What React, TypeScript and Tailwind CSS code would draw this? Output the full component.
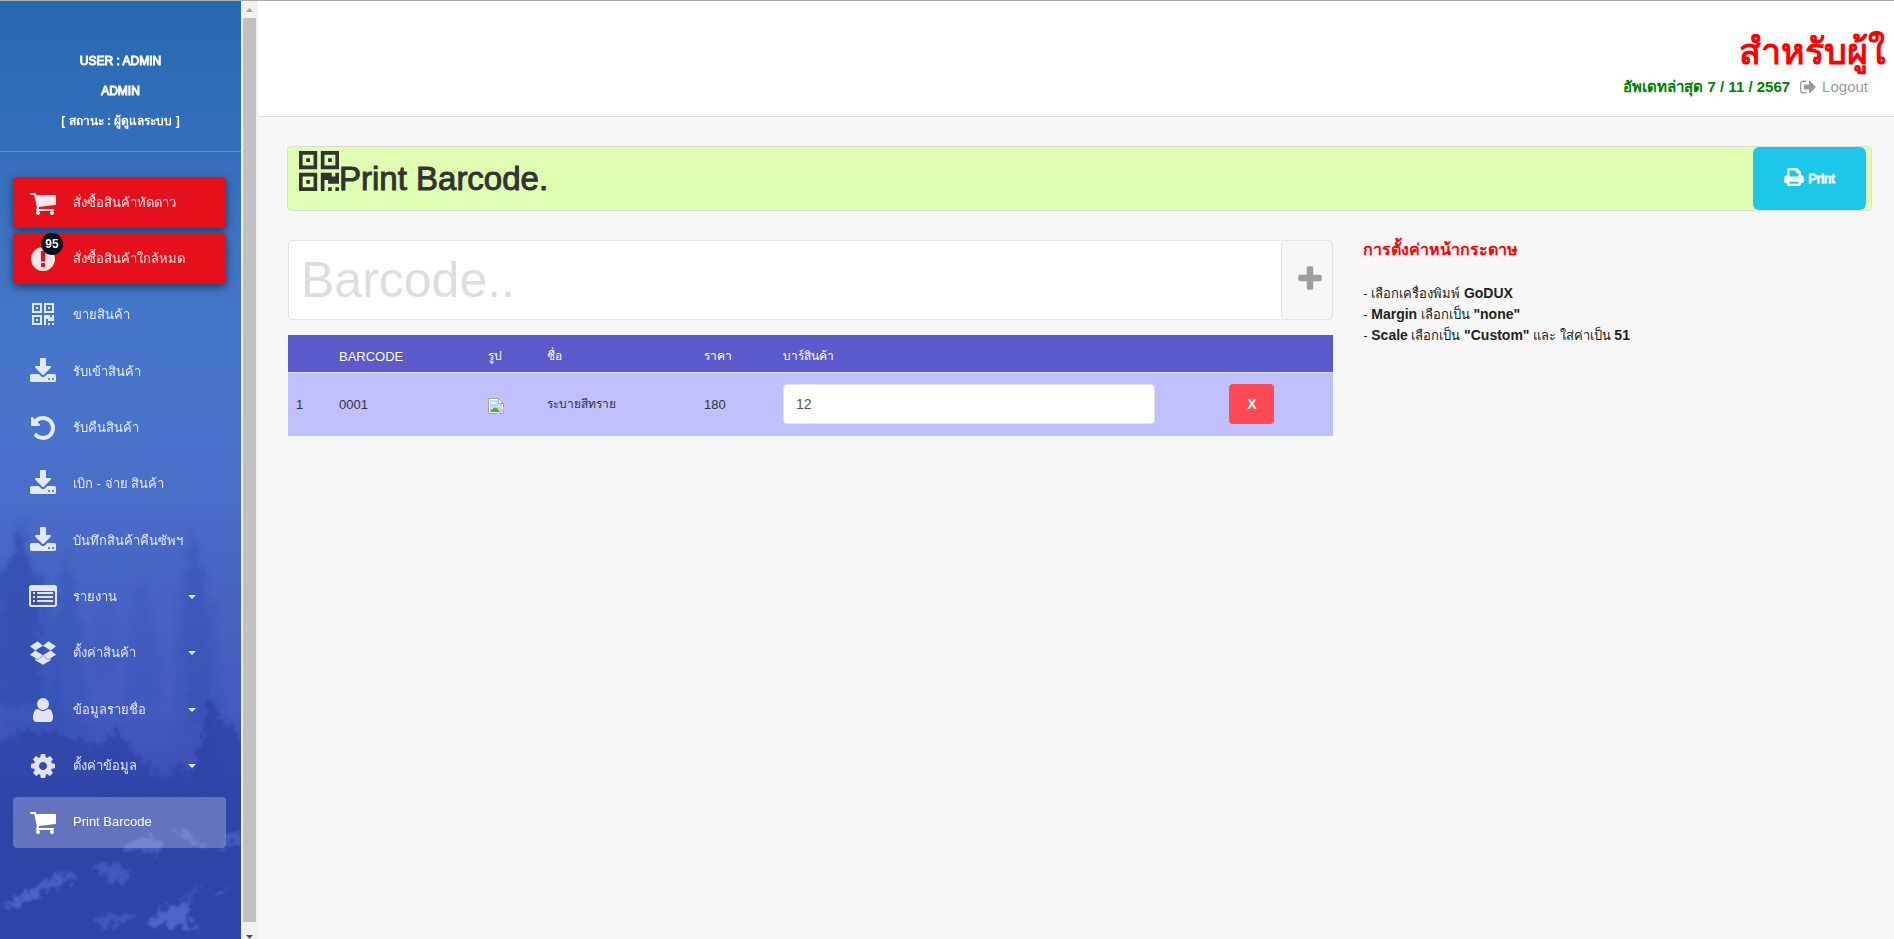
import React, { useState } from 'react';

interface IconProps {
  name: keyof typeof ICONS;
  className?: string;
  viewBox?: string;
}

const ICONS = {
  cart: 'M704 1536q0 52-38 90t-90 38-90-38-38-90 38-90 90-38 90 38 38 90zm896 0q0 52-38 90t-90 38-90-38-38-90 38-90 90-38 90 38 38 90zm128-1088v512q0 24-16.5 42.5t-40.5 21.5l-1044 122q13 60 13 70 0 16-24 64h920q26 0 45 19t19 45-19 45-45 19h-1024q-26 0-45-19t-19-45q0-11 8-31.5t16-36 21.5-40 15.5-29.5l-177-823h-204q-26 0-45-19t-19-45 19-45 45-19h256q16 0 28.5 6.5t19.5 15.5 13 24.5 8 26 5.5 29.5 4.5 26h1201q26 0 45 19t19 45z',
  alert: 'M896 128q209 0 385.5 103t279.5 279.5 103 385.5-103 385.5-279.5 279.5-385.5 103-385.5-103-279.5-279.5-103-385.5 103-385.5 279.5-279.5 385.5-103zm128 1247v-190q0-14-9-23.5t-22-9.5h-192q-13 0-23 10t-10 23v190q0 13 10 23t23 10h192q13 0 22-9.5t9-23.5zm-2-344l18-621q0-12-10-18-10-8-24-8h-220q-14 0-24 8-10 6-10 18l17 621q0 10 10 17.5t24 7.5h185q14 0 23.5-7.5t10.5-17.5z',
  qrcode: 'M576 1152v128h-128v-128h128zm0-768v128h-128v-128h128zm768 0v128h-128v-128h128zm-1024 1023h384v-383h-384v383zm0-767h384v-384h-384v384zm768 0h384v-384h-384v384zm-256 256v640h-640v-640h640zm512 512v128h-128v-128h128zm256 0v128h-128v-128h128zm0-512v384h-384v-128h-128v384h-128v-640h384v128h128v-128h128zm-768-768v640h-640v-640h640zm768 0v640h-640v-640h640z',
  download: 'M1344 1344q0-26-19-45t-45-19-45 19-19 45 19 45 45 19 45-19 19-45zm256 0q0-26-19-45t-45-19-45 19-19 45 19 45 45 19 45-19 19-45zm128-224v320q0 40-28 68t-68 28h-1472q-40 0-68-28t-28-68v-320q0-40 28-68t68-28h465l135 136q58 56 136 56t136-56l136-136h464q40 0 68 28t28 68zm-325-569q17 41-14 70l-448 448q-18 19-45 19t-45-19l-448-448q-31-29-14-70 17-39 59-39h256v-448q0-26 19-45t45-19h256q26 0 45 19t19 45v448h256q42 0 59 39z',
  undo: 'M1664 896q0 156-61 298t-164 245-245 164-298 61q-172 0-327-72.5t-264-204.5q-7-10-6.5-22.5t8.5-20.5l137-138q10-9 25-9 16 2 23 12 73 95 179 147t225 52q104 0 198.5-40.5t163.5-109.5 109.5-163.5 40.5-198.5-40.5-198.5-109.5-163.5-163.5-109.5-198.5-40.5q-98 0-188 35.5t-160 101.5l137 138q31 30 14 69-17 40-59 40h-448q-26 0-45-19t-19-45v-448q0-42 40-59 39-17 69 14l130 129q107-101 244.5-156.5t284.5-55.5q156 0 298 61t245 164 164 245 61 298z',
  list: 'M256 576h128v128h-128zM256 832h128v128h-128zM256 1088h128v128h-128zM512 576h1024v128h-1024zM512 832h1024v128h-1024zM512 1088h1024v128h-1024zM1664 1376v-832q0-13-9.5-22.5t-22.5-9.5h-1472q-13 0-22.5 9.5t-9.5 22.5v832q0 13 9.5 22.5t22.5 9.5h1472q13 0 22.5-9.5t9.5-22.5zm128-1088v1088q0 66-47 113t-113 47h-1472q-66 0-113-47t-47-113v-1088q0-66 47-113t113-47h1472q66 0 113 47t47 113z',
  dropbox: 'M402 729l494 305-342 285-490-319zM1390 729l338 271-490 319-342-285zM554 140l342 285-494 304-338-270zM1238 140l490 319-338 270-494-304zM1388 1254v108l-492 293-492-293v-108l150 96 342-284 342 284z',
  user: 'M1536 1399q0 109-62.5 187t-150.5 78h-854q-88 0-150.5-78t-62.5-187q0-85 8.5-160.5t31.5-152 58.5-131 94-89 134.5-34.5q131 128 313 128t313-128q76 0 134.5 34.5t94 89 58.5 131 31.5 152 8.5 160.5zm-256-887q0 159-112.5 271.5t-271.5 112.5-271.5-112.5-112.5-271.5 112.5-271.5 271.5-112.5 271.5 112.5 112.5 271.5z',
  cog: 'M1152 896q0-106-75-181t-181-75-181 75-75 181 75 181 181 75 181-75 75-181zm512-109v222q0 12-8 23t-20 13l-185 28q-19 54-39 91 35 50 107 138 10 12 10 25t-9 23q-27 37-99 108t-94 71q-12 0-26-9l-138-108q-44 23-91 38-16 136-29 186-7 28-36 28h-222q-14 0-24.5-8.5t-11.5-21.5l-28-184q-49-16-90-37l-141 107q-10 9-25 9-14 0-25-11-126-114-165-168-7-10-7-23 0-12 8-23 15-21 51-66.5t54-70.5q-27-50-41-99l-183-27q-13-2-21-12.5t-8-23.5v-222q0-12 8-23t19-13l186-28q14-46 39-92-40-57-107-138-10-12-10-24 0-10 9-23 26-36 98.5-107.5t94.5-71.5q13 0 26 10l138 107q44-23 91-38 16-136 29-186 7-28 36-28h222q14 0 24.5 8.5t11.5 21.5l28 184q49 16 90 37l142-107q9-9 24-9 13 0 25 10 129 119 165 170 7 8 7 22 0 12-8 23-15 21-51 66.5t-54 70.5q26 50 41 98l183 28q13 2 21 12.5t8 23.5z',
  print: 'M448 1536h896v-256h-896v256zm0-640h896v-384h-160q-40 0-68-28t-28-68v-160h-640v640zm1152 64q0-26-19-45t-45-19-45 19-19 45 19 45 45 19 45-19 19-45zm128 0v416q0 13-9.5 22.5t-22.5 9.5h-224v160q0 40-28 68t-68 28h-960q-40 0-68-28t-28-68v-160h-224q-13 0-22.5-9.5t-9.5-22.5v-416q0-79 56.5-135.5t135.5-56.5h64v-544q0-40 28-68t68-28h672q40 0 88 20t76 48l152 152q28 28 48 76t20 88v256h64q79 0 135.5 56.5t56.5 135.5z',
  plus: 'M1600 736v192q0 40-28 68t-68 28h-416v416q0 40-28 68t-68 28h-192q-40 0-68-28t-28-68v-416h-416q-40 0-68-28t-28-68v-192q0-40 28-68t68-28h416v-416q0-40 28-68t68-28h192q40 0 68 28t28 68v416h416q40 0 68 28t28 68z',
  logout: 'M704 1440q0 4 1 20t.5 26.5-3 23.5-10 19.5-20.5 6.5h-320q-119 0-203.5-84.5t-84.5-203.5v-704q0-119 84.5-203.5t203.5-84.5h320q13 0 22.5 9.5t9.5 22.5q0 4 1 20t.5 26.5-3 23.5-10 19.5-20.5 6.5h-320q-66 0-113 47t-47 113v704q0 66 47 113t113 47h312l11.5 1 11.5 3 8 5.5 7 9 2 13.5zm928-544q0 26-19 45l-544 544q-19 19-45 19t-45-19-19-45v-288h-448q-26 0-45-19t-19-45v-384q0-26 19-45t45-19h448v-288q0-26 19-45t45-19 45 19l544 544q19 19 19 45z',
};

function Icon({ name, className, viewBox = '0 0 1792 1792' }: IconProps) {
  return (
    <svg xmlns="http://www.w3.org/2000/svg" viewBox={viewBox} className={className} fill="currentColor" aria-hidden="true">
      <path d={ICONS[name]} />
    </svg>
  );
}

interface MenuItem {
  label: string;
  icon: keyof typeof ICONS;
  variant?: 'danger' | 'active';
  badge?: number;
  dropdown?: boolean;
}

const menu: MenuItem[] = [
  { label: 'สั่งซื้อสินค้าทัดดาว', icon: 'cart', variant: 'danger' },
  { label: 'สั่งซื้อสินค้าใกล้หมด', icon: 'alert', variant: 'danger', badge: 95 },
  { label: 'ขายสินค้า', icon: 'qrcode' },
  { label: 'รับเข้าสินค้า', icon: 'download' },
  { label: 'รับคืนสินค้า', icon: 'undo' },
  { label: 'เบิก - จ่าย สินค้า', icon: 'download' },
  { label: 'บันทึกสินค้าคืนซัพฯ', icon: 'download' },
  { label: 'รายงาน', icon: 'list', dropdown: true },
  { label: 'ตั้งค่าสินค้า', icon: 'dropbox', dropdown: true },
  { label: 'ข้อมูลรายชื่อ', icon: 'user', dropdown: true },
  { label: 'ตั้งค่าข้อมูล', icon: 'cog', dropdown: true },
  { label: 'Print Barcode', icon: 'cart', variant: 'active' },
];

const itemStyles = {
  default: 'text-white/85',
  danger: 'bg-[#e5101b] text-white/90 shadow-[0_3px_8px_rgba(0,0,0,0.5)]',
  active: 'bg-white/25 text-white',
};

// Forest at dusk, behind the menu
function SidebarScene() {
  return (
    <svg className="absolute inset-0 h-full w-full" viewBox="0 0 241 938" preserveAspectRatio="none" aria-hidden="true">
      <defs>
        <linearGradient id="sky" x1="0" y1="0" x2="0" y2="1">
          <stop offset="0" stopColor="#2569b0" />
          <stop offset="0.16" stopColor="#356fbc" />
          <stop offset="0.33" stopColor="#4475c8" />
          <stop offset="0.45" stopColor="#4a74cb" />
          <stop offset="0.64" stopColor="#4763c3" />
          <stop offset="0.76" stopColor="#445abf" />
          <stop offset="0.88" stopColor="#3746ae" />
          <stop offset="1" stopColor="#3744b0" />
        </linearGradient>
        <filter id="soft" x="-20%" y="-20%" width="140%" height="140%">
          <feTurbulence type="fractalNoise" baseFrequency="0.08" numOctaves="4" seed="4" result="n" />
          <feDisplacementMap in="SourceGraphic" in2="n" scale="22" xChannelSelector="R" yChannelSelector="G" />
          <feGaussianBlur stdDeviation="2" />
        </filter>
        <filter id="edge" x="-20%" y="-20%" width="140%" height="140%">
          <feTurbulence type="fractalNoise" baseFrequency="0.13" numOctaves="4" seed="9" result="n" />
          <feDisplacementMap in="SourceGraphic" in2="n" scale="20" xChannelSelector="R" yChannelSelector="G" />
          <feGaussianBlur stdDeviation="0.8" />
        </filter>
      </defs>
      <rect width="241" height="938" fill="url(#sky)" />
      <g fill="#2c4fae" filter="url(#soft)">
        <path d="M0 560l12 -8 8 -32 8 40 20 20 6 60 10 110H0z" opacity="0.4" />
        <path d="M66 545l14 60 8 130H50l4 -110z" opacity="0.35" />
        <path d="M142 570l12 50 6 80h-34l4 -70z" opacity="0.2" />
        <path d="M102 585l8 30 4 60h-24z" opacity="0.15" />
        <path d="M192 530l12 52 12 30 10 130h-52l2 -110 4 -50z" opacity="0.25" />
      </g>
      <g fill="#2846a4" filter="url(#edge)">
        <path d="M21 520l8 40 14 24 -4 30 4 90H-10V580l20 -14z" opacity="0.35" />
        <path d="M193 532l8 50 8 50 -2 90h-18l-4 -100z" opacity="0.2" />
      </g>
      <g fill="#3044a8" filter="url(#edge)">
        <path d="M-10 744l20 -6 20 -8 24 2 20 5 20 8 12 -2 10 -20 8 18 14 12 12 16 14 8 14 -12 16 8 8 -36 4 -40 4 -6 10 24 14 14 8 18 30 4v230H-10z" opacity="0.8" />
        <path d="M115 735l14 60h-26zM154 770l10 40h-22zM178 765l8 40h-18zM208 700l14 90h-28z" opacity="0.7" />
        <path d="M-10 780h270v170H-10z" opacity="0.4" />
      </g>
      <g fill="#6878de" filter="url(#edge)">
        <path d="M4 908q16-18 34-22 18-8 26-4-14 8-28 14-14 12-32 12z" opacity="0.55" />
        <path d="M36 884q20-18 42-10-10 14-42 10z" opacity="0.4" />
        <path d="M92 868q26-12 40 2l-6 16q-18-10-34-18z" opacity="0.35" />
        <path d="M124 850q16-22 42-8-10 14-42 8z" opacity="0.45" />
        <path d="M172 830q14-6 20 6l16 10q-20 0-36-16z" opacity="0.45" />
        <path d="M92 922q24-16 44-6-14 12-44 6z" opacity="0.35" />
        <path d="M146 926q18-26 46-22l-6 14 14 14q-30-12-54-6z" opacity="0.6" />
        <path d="M170 908q16-4 30-28-6 22-30 28z" opacity="0.4" />
        <path d="M214 896q10-6 14-14 4 12-14 14z" opacity="0.5" />
        <path d="M218 848q12-20 26-18v10z" opacity="0.4" />
      </g>
    </svg>
  );
}

function Sidebar() {
  return (
    <aside className="relative w-[241px] shrink-0 overflow-hidden">
      <SidebarScene />
      <div className="relative flex flex-col">
        <div className="flex h-[151px] flex-col items-center gap-2.5 border-b border-white/25 pt-[50px] text-xs leading-5 text-white">
          <p className="[-webkit-text-stroke:1px]">USER : ADMIN</p>
          <p className="[-webkit-text-stroke:1px]">ADMIN</p>
          <p className="font-bold">[ สถานะ : ผู้ดูแลระบบ ]</p>
        </div>
        <nav className="mt-[25px] flex min-h-[671px] flex-col justify-between pr-[15px] pl-[13px]">
          {menu.map((item) => (
            <a
              key={item.label}
              href="#"
              className={`flex h-[51px] items-center gap-4 rounded px-4 text-[13px] leading-5 ${itemStyles[item.variant ?? 'default']}`}
            >
              <span className="relative">
                <Icon name={item.icon} className="h-7 w-7" />
                {item.badge && (
                  <span className="absolute -top-3 left-3 flex h-[22px] w-[22px] items-center justify-center rounded-full bg-[#07111c] text-xs font-bold text-white">
                    {item.badge}
                  </span>
                )}
              </span>
              <span className="flex-1 font-medium whitespace-nowrap">{item.label}</span>
              {item.dropdown && (
                <svg viewBox="0 0 8 4" className="mr-3.5 h-1 w-2" fill="currentColor" aria-hidden="true">
                  <path d="M0 0h8L4 4z" />
                </svg>
              )}
            </a>
          ))}
        </nav>
      </div>
    </aside>
  );
}

function ScrollBar() {
  return (
    <div className="flex w-[17px] shrink-0 flex-col items-center justify-between bg-[#f1f1f1]" aria-hidden="true">
      <svg viewBox="0 0 17 17" className="h-[17px] w-[17px]"><path d="M5 11h7L8.500 7z" fill="#a3a3a3" /></svg>
      <div className="w-[13px] flex-1 bg-[#c1c1c1]" />
      <svg viewBox="0 0 17 17" className="h-[17px] w-[17px]"><path d="M5 13h7L8.500 17z" fill="#505050" /></svg>
    </div>
  );
}

function BrokenImage() {
  return (
    <svg viewBox="0 0 16 16" className="mt-1 h-4 w-4" role="img" aria-label="รูป">
      <path d="M0.500 0.500h10l5 5v10h-15z" fill="#fff" stroke="#a3a3a3" />
      <path d="M2 2h8v4h4v8H2z" fill="#c3dafa" />
      <path d="M3 6q0-2 2-2 2-1 2 1 2 0 1 1z" fill="#fff" />
      <path d="M2 14q3-5 7-4l3 4z" fill="#4fae35" />
      <path d="M10.500 0.500v5h5z" fill="#fff" stroke="#a3a3a3" />
      <path d="M8 16l8-7v3l-4 4z" fill="#c0bfff" />
    </svg>
  );
}

function BarcodeTable() {
  const [amount, setAmount] = useState('12');

  return (
    <table className="mt-[15px] w-full table-fixed text-left text-[13px] text-[#333]">
      <colgroup>
        <col className="w-[43px]" />
        <col className="w-[149px]" />
        <col className="w-[59px]" />
        <col className="w-[157px]" />
        <col className="w-[79px]" />
        <col />
        <col className="w-[58px]" />
        <col className="w-[112px]" />
      </colgroup>
      <thead>
        <tr className="h-[37px] border-b border-[#ddd] bg-[#5a5aca] text-white [&>th]:px-2 [&>th]:pt-1.5 [&>th]:font-medium">
          <th></th>
          <th>BARCODE</th>
          <th className="text-xs">รูป</th>
          <th className="text-xs">ชื่อ</th>
          <th className="text-xs">ราคา</th>
          <th className="text-xs"><label htmlFor="amount">บาร์สินค้า</label></th>
          <th></th>
          <th></th>
        </tr>
      </thead>
      <tbody>
        <tr className="h-16 bg-[#c0bfff] [&>td]:px-2">
          <td>1</td>
          <td>0001</td>
          <td><BrokenImage /></td>
          <td className="text-xs">ระบายสีทราย</td>
          <td>180</td>
          <td>
            <input
              id="amount"
              value={amount}
              onChange={(e) => setAmount(e.target.value)}
              className="h-10 w-full rounded border border-[#e3e3e3] bg-white px-3 text-sm text-[#565656] outline-none"
            />
          </td>
          <td></td>
          <td>
            <button type="button" className="h-10 w-[45px] rounded bg-[#ff4a55] text-sm font-bold text-white">
              X
            </button>
          </td>
        </tr>
      </tbody>
    </table>
  );
}

export default function App() {
  return (
    <div className="flex min-h-screen border-t border-[#a9a9b0] bg-[#f7f7f7] font-['Liberation_Sans',sans-serif] text-[#222]">
      <Sidebar />
      <ScrollBar />
      <div className="min-w-0 flex-1">
        <header className="flex h-[116px] flex-col items-end border-b border-[#e0e0e0] bg-white pt-7 pr-2">
          <div className="text-4xl leading-[46px] font-bold whitespace-nowrap text-[#f00]">
            สำหรับผู้ใ
          </div>
          <div className="flex items-center gap-2.5 pr-[18px] text-[15px] leading-6">
            <span className="font-bold text-[#008000]">อัพเดทล่าสุด 7 / 11 / 2567</span>
            <a href="#" className="flex items-center gap-1.5 text-[#9a9a9a]">
              <Icon name="logout" className="h-4 w-4" viewBox="64 128 1600 1536" />
              Logout
            </a>
          </div>
        </header>

        <main className="pt-[29px] pr-2 pl-[15px]">
          <div className="mr-3.5 ml-3.5 flex h-[65px] rounded border border-[#dcdcdc] bg-[#dfffb2]">
            <h1 className="flex flex-1 items-start pl-[11px] text-[33px] leading-16 text-[#333] [-webkit-text-stroke:1px]">
              <Icon name="qrcode" className="mt-1 h-10 w-10" viewBox="192 128 1408 1408" />
              Print Barcode.
            </h1>
            <button type="button" className="mr-[5px] flex w-[113px] items-center justify-center gap-1 rounded-md bg-[#1dc7ea] pb-1 text-[13px] text-white">
              <Icon name="print" className="h-5 w-5 stroke-current stroke-[80]" />
              <span className="pt-1 [-webkit-text-stroke:1px]">Print</span>
            </button>
          </div>

          <div className="mt-[29px] grid grid-cols-3">
            <section className="col-span-2 px-[15px]">
              <div className="flex h-20">
                <input
                  aria-label="Barcode"
                  placeholder="Barcode.."
                  className="min-w-0 flex-1 rounded-l border border-r-0 border-[#e3e3e3] bg-white px-3 text-[50px] outline-none placeholder:text-[#ddd]"
                />
                <button type="button" aria-label="เพิ่ม" className="flex w-[52px] items-center justify-center rounded border border-[#e3e3e3] pb-0.5 pl-1.5 text-[#9e9e9e]">
                  <Icon name="plus" className="h-[30px] w-[30px]" />
                </button>
              </div>
              <BarcodeTable />
            </section>

            <section className="px-[15px] text-[13px] leading-5">
              <h2 className="text-base leading-5 font-bold text-[#f00]">การตั้งค่าหน้ากระดาษ</h2>
              <ul className="mt-[23px] [&_b]:text-sm [&_b]:leading-5">
                <li>- เลือกเครื่องพิมพ์ <b>GoDUX</b></li>
                <li>- <b>Margin</b> เลือกเป็น <b>"none"</b></li>
                <li>- <b>Scale</b> เลือกเป็น <b>"Custom"</b> และ ใส่ค่าเป็น <b>51</b></li>
              </ul>
            </section>
          </div>
        </main>
      </div>
    </div>
  );
}
